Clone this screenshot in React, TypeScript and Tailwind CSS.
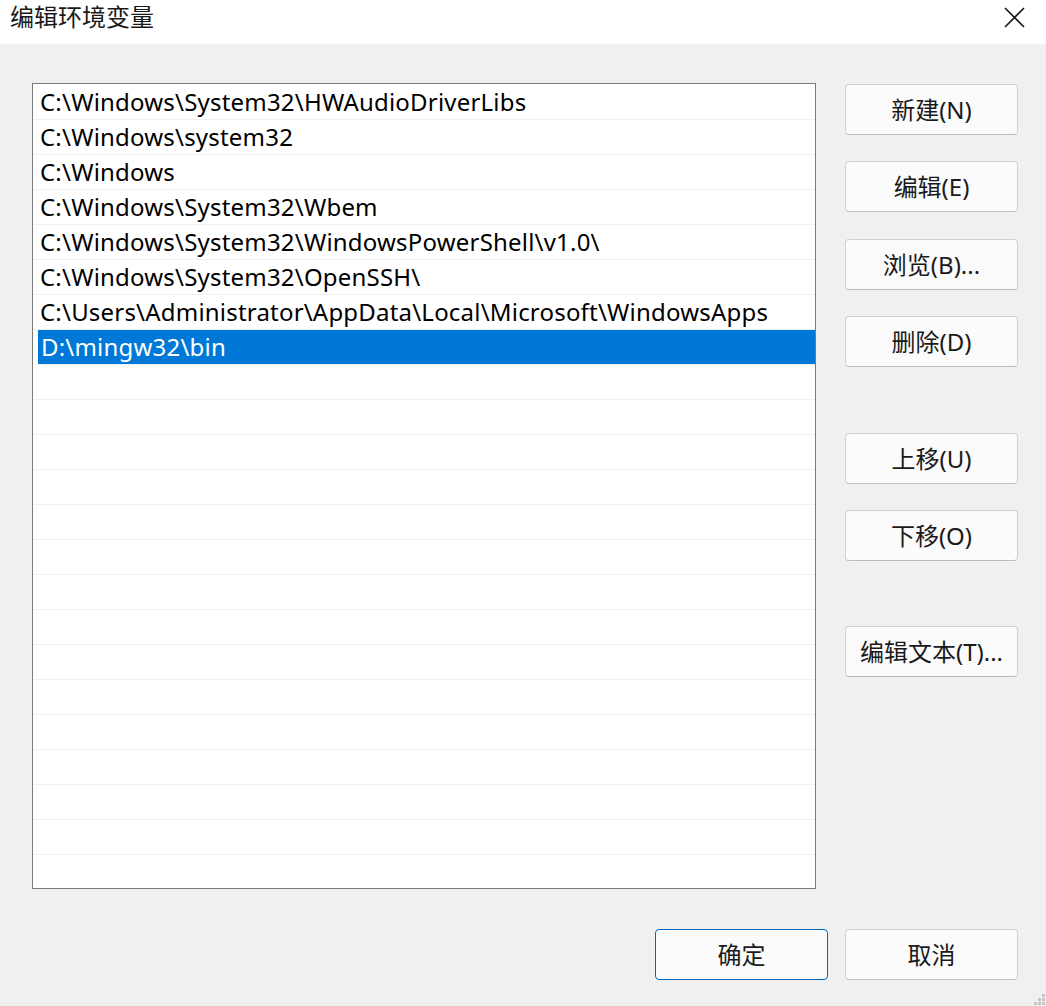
const paths = [
  "C:\\Windows\\System32\\HWAudioDriverLibs",
  "C:\\Windows\\system32",
  "C:\\Windows",
  "C:\\Windows\\System32\\Wbem",
  "C:\\Windows\\System32\\WindowsPowerShell\\v1.0\\",
  "C:\\Windows\\System32\\OpenSSH\\",
  "C:\\Users\\Administrator\\AppData\\Local\\Microsoft\\WindowsApps",
  "D:\\mingw32\\bin",
];

const selected = 7;
const totalRows = 23;

const font = { fontFamily: '"Noto Sans", "Noto Sans CJK SC", sans-serif' };

type BtnProps = { label: string; primary?: boolean; className?: string };

const Btn = ({ label, primary, className }: BtnProps) => (
  <button
    className={
      "w-[173px] h-[51px] rounded-[4px] bg-[#fbfbfb] text-[24px] text-[#1a1a1a] leading-none flex items-center justify-center " +
      (primary ? "border border-[#0067c0] " : "border border-[#d0d0d0] border-b-[#bcbcbc] ") +
      (className ?? "")
    }
  >
    {label}
  </button>
);

export default function App() {
  const rows = Array.from({ length: totalRows }, (_, i) => paths[i] ?? "");

  return (
    <div className="w-[1046px] h-[1006px] flex flex-col bg-[#f0f0f0] overflow-hidden relative" style={font}>
      {/* title bar */}
      <div className="h-[44px] bg-white flex items-center justify-between shrink-0">
        <span className="pl-[10px] text-[24px] text-[#1a1a1a] pb-[10px]">编辑环境变量</span>
        <svg className="mr-[21px] mb-[10px]" width="21" height="21" viewBox="0 0 21 21">
          <path d="M1 1 L20 20 M20 1 L1 20" stroke="#1a1a1a" strokeWidth="1.6" />
        </svg>
      </div>

      <div className="flex pl-[32px] pt-[39px]">
        {/* list */}
        <div className="w-[784px] h-[806px] border border-[#7a7a7a] bg-white pt-[1px] pl-[1px] overflow-hidden">
          {rows.map((p, i) => (
            <div key={i} className="h-[35px] border-b border-[#efefef]">
              <div
                className={
                  "h-[34px] flex items-center text-[24px] tracking-[0.2px] whitespace-nowrap " +
                  (i === selected ? "ml-[4px] bg-[#0078d7] text-white pl-[3px]" : "pl-[6px] text-black")
                }
              >
                {p}
              </div>
            </div>
          ))}
        </div>

        {/* side buttons */}
        <div className="flex flex-col ml-[29px] pt-[1px]">
          <Btn label="新建(N)" />
          <Btn label="编辑(E)" className="mt-[26px]" />
          <Btn label="浏览(B)..." className="mt-[27px]" />
          <Btn label="删除(D)" className="mt-[26px]" />
          <Btn label="上移(U)" className="mt-[66px]" />
          <Btn label="下移(O)" className="mt-[26px]" />
          <Btn label="编辑文本(T)..." className="mt-[65px]" />
        </div>
      </div>

      {/* bottom buttons */}
      <div className="flex justify-end gap-[17px] pr-[28px] pt-[40px]">
        <Btn label="确定" primary className="w-[172px]" />
        <Btn label="取消" />
      </div>

      {/* resize grip */}
      <svg className="absolute right-0 bottom-0" width="16" height="16" viewBox="0 0 16 16">
        <rect x="12" y="4" width="3" height="3" fill="#c4c4c4" />
        <rect x="8" y="8" width="3" height="3" fill="#c4c4c4" />
        <rect x="12" y="8" width="3" height="3" fill="#c4c4c4" />
        <rect x="4" y="12" width="3" height="3" fill="#c4c4c4" />
        <rect x="8" y="12" width="3" height="3" fill="#c4c4c4" />
        <rect x="12" y="12" width="3" height="3" fill="#c4c4c4" />
      </svg>
    </div>
  );
}
